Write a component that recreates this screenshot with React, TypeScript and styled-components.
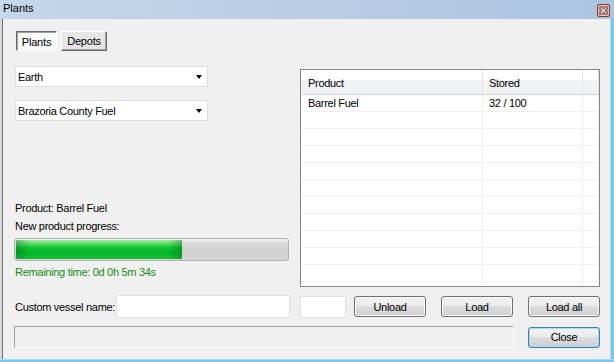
import React from "react";
import styled, { createGlobalStyle } from "styled-components";

const GlobalStyle = createGlobalStyle`
  html, body {
    margin: 0;
    padding: 0;
    width: 614px;
    height: 362px;
    overflow: hidden;
    background: #f0f0f0;
  }
  body {
    font-family: "Liberation Sans", Arial, sans-serif;
    font-size: 11px;
    color: #000;
  }
`;

const Window = styled.div`
  width: 614px;
  height: 362px;
  display: flex;
  flex-direction: column;
`;

const TitleBar = styled.div`
  height: 19px;
  flex: none;
  display: flex;
  align-items: center;
  justify-content: space-between;
  padding: 0 4px 0 3px;
  background: linear-gradient(to right, #c4d7eb 0%, #b6cce4 60%, #abc5e1 100%);
`;

const TitleText = styled.span`
  font-size: 11px;
  line-height: 19px;
  margin-top: -2px;
`;

const Frame = styled.div`
  flex: 1;
  display: flex;
  min-height: 0;
`;

const LeftEdge = styled.div`
  width: 3px;
  flex: none;
  background: linear-gradient(to right, #dadada 0 2px, #6f6f6f 2px 3px);
`;

const RightEdge = styled.div`
  width: 4px;
  flex: none;
  background: linear-gradient(to right, #a9dcf3 0 1px, #7cc6ec 1px 4px);
`;

const BottomEdge = styled.div`
  height: 3px;
  flex: none;
  background: linear-gradient(to bottom, #a9dcf3 0 1px, #7cc6ec 1px 3px);
`;

const Client = styled.div`
  flex: 1;
  background: #f0f0f0;
  padding: 12px 10px 11px 11px;
  display: flex;
  flex-direction: column;
`;

const TopGrid = styled.div`
  display: grid;
  grid-template-columns: 275px 300px;
  column-gap: 11px;
  height: 256px;
`;

const LeftCol = styled.div`
  display: flex;
  flex-direction: column;
`;

const TabRow = styled.div`
  display: flex;
  gap: 4px;
  padding-left: 2px;
  height: 20px;
`;

const TabButton = styled.div<{ $pressed?: boolean }>`
  box-sizing: border-box;
  height: 20px;
  width: ${(p) => (p.$pressed ? "41px" : "46px")};
  display: flex;
  align-items: center;
  justify-content: center;
  letter-spacing: -0.2px;
  padding-top: ${(p) => (p.$pressed ? "1px" : "0")};
  border: 1px solid;
  border-color: ${(p) =>
    p.$pressed ? "#6a6a6a #ffffff #ffffff #6a6a6a" : "#ffffff #6a6a6a #6a6a6a #ffffff"};
  background: ${(p) => (p.$pressed ? "#f9f9f9" : "#e6e6e6")};
  box-shadow: ${(p) =>
    p.$pressed ? "inset 1px 1px 0 #a0a0a0" : "inset -1px -1px 0 #a0a0a0"};
`;

const Combo = styled.div<{ $top: number }>`
  box-sizing: border-box;
  width: 193px;
  height: 21px;
  margin-left: 1px;
  margin-top: ${(p) => p.$top}px;
  background: #fff;
  border: 1px solid #dedede;
  display: flex;
  align-items: center;
  justify-content: space-between;
  padding: 0 4px 0 2px;
  letter-spacing: -0.3px;
`;

const ComboArrow = styled.span`
  width: 0;
  height: 0;
  border-left: 3.5px solid transparent;
  border-right: 3.5px solid transparent;
  border-top: 4px solid #000;
  margin-right: 1px;
`;

const Label = styled.div<{ $top: number; $green?: boolean }>`
  margin-top: ${(p) => p.$top}px;
  margin-left: 1px;
  height: 13px;
  line-height: 13px;
  letter-spacing: -0.3px;
  white-space: nowrap;
  color: ${(p) => (p.$green ? "#138c13" : "#000")};
`;

const Progress = styled.div`
  box-sizing: border-box;
  margin-top: 5px;
  height: 23px;
  width: 275px;
  border: 1px solid #b2b2b2;
  border-radius: 3px;
  background: linear-gradient(to bottom, #f2f2f2 0%, #dadada 20%, #cfcfcf 60%, #d6d6d6 100%);
  padding: 1px;
  display: flex;
`;

const ProgressFill = styled.div`
  height: 100%;
  border-radius: 1px;
  background: linear-gradient(
      to right,
      rgba(0, 90, 20, 0.35) 0%,
      rgba(0, 90, 20, 0) 8%,
      rgba(0, 90, 20, 0) 92%,
      rgba(0, 90, 20, 0.35) 100%
    ),
    linear-gradient(to bottom, #a4eca8 0%, #5fdc6a 18%, #0fc234 40%, #04b526 70%, #1ac53a 100%);
`;

const ListBox = styled.div`
  box-sizing: border-box;
  margin-top: 38px;
  height: 218px;
  border: 1px solid #828790;
  background: #fff;
  overflow: hidden;
`;

const ListRow = styled.div<{ $header?: boolean }>`
  display: grid;
  grid-template-columns: 182px 100px 1fr;
  height: ${(p) => (p.$header ? "25px" : "17px")};
  box-sizing: border-box;
  border-bottom: 1px solid ${(p) => (p.$header ? "#d6d6d6" : "#f0f0f0")};
  background: ${(p) =>
    p.$header ? "linear-gradient(to bottom, #ffffff 0%, #ffffff 40%, #f1f2f4 41%, #f1f2f4 100%)" : "#fff"};
`;

const Cell = styled.div<{ $header?: boolean; $pad: number }>`
  box-sizing: border-box;
  padding-left: ${(p) => p.$pad}px;
  display: flex;
  align-items: center;
  letter-spacing: -0.3px;
  white-space: nowrap;
  border-right: 1px solid ${(p) => (p.$header ? "#e3e4e6" : "#f0f0f0")};
  padding-top: ${(p) => (p.$header ? "1px" : "0")};
`;

const BottomRow = styled.div<{ $height: number }>`
  margin-top: 8px;
  height: ${(p) => p.$height}px;
  display: flex;
  align-items: center;
`;

const FieldLabel = styled.div`
  width: 101px;
  margin-left: 1px;
  letter-spacing: -0.3px;
  white-space: nowrap;
`;

const TextBox = styled.div<{ $width: number; $left: number; $height: number }>`
  box-sizing: border-box;
  width: ${(p) => p.$width}px;
  height: ${(p) => p.$height}px;
  margin-left: ${(p) => p.$left}px;
  background: #fff;
  border: 1px solid #e1e1e1;
`;

const Button = styled.div<{ $left: number; $focused?: boolean }>`
  box-sizing: border-box;
  width: 72px;
  height: 21px;
  margin-left: ${(p) => p.$left}px;
  border-radius: 3px;
  border: 1px solid ${(p) => (p.$focused ? "#3c7fb1" : "#707070")};
  box-shadow: ${(p) => (p.$focused ? "inset 0 0 0 1px #a6dcf5" : "inset 0 0 0 1px #fbfbfb")};
  background: linear-gradient(to bottom, #f2f2f2 0%, #ebebeb 49%, #dddddd 50%, #cfcfcf 100%);
  display: flex;
  align-items: center;
  justify-content: center;
  letter-spacing: -0.3px;
`;

const StatusPanel = styled.div`
  box-sizing: border-box;
  width: 500px;
  height: 22px;
  border-style: solid;
  border-width: 1px;
  border-color: #a0a0a0 #ffffff #ffffff #a0a0a0;
`;

const CloseGlyph = () => (
  <svg width="13" height="13" viewBox="0 0 13 13" style={{ marginTop: 1 }}>
    <rect x="0.5" y="0.5" width="12" height="12" rx="1.5" fill="#c98a85" stroke="#7d3b36" />
    <rect x="1.5" y="1.5" width="10" height="10" rx="1" fill="none" stroke="#e9c2bd" />
    <path d="M4 4 L9 9 M9 4 L4 9" stroke="#5a1e1a" strokeWidth="2.6" strokeLinecap="square" />
    <path d="M4 4 L9 9 M9 4 L4 9" stroke="#ffffff" strokeWidth="1.3" strokeLinecap="square" />
  </svg>
);

const emptyRows = Array.from({ length: 11 });

export default function App() {
  return (
    <>
      <GlobalStyle />
      <Window>
        <TitleBar>
          <TitleText>Plants</TitleText>
          <CloseGlyph />
        </TitleBar>
        <Frame>
          <LeftEdge />
          <Client>
            <TopGrid>
              <LeftCol>
                <TabRow>
                  <TabButton $pressed>Plants</TabButton>
                  <TabButton>Depots</TabButton>
                </TabRow>
                <Combo $top={15}>
                  <span>Earth</span>
                  <ComboArrow />
                </Combo>
                <Combo $top={13}>
                  <span>Brazoria County Fuel</span>
                  <ComboArrow />
                </Combo>
                <Label $top={81}>Product: Barrel Fuel</Label>
                <Label $top={5}>New product progress:</Label>
                <Progress>
                  <ProgressFill style={{ width: `${(166 / 271) * 100}%` }} />
                </Progress>
                <Label $top={5} $green>
                  Remaining time: 0d 0h 5m 34s
                </Label>
              </LeftCol>
              <ListBox>
                <ListRow $header>
                  <Cell $header $pad={7}>Product</Cell>
                  <Cell $header $pad={6}>Stored</Cell>
                  <Cell $header $pad={0} />
                </ListRow>
                <ListRow>
                  <Cell $pad={7}>Barrel Fuel</Cell>
                  <Cell $pad={6}>32 / 100</Cell>
                  <Cell $pad={0} />
                </ListRow>
                {emptyRows.map((_, i) => (
                  <ListRow key={i}>
                    <Cell $pad={7} />
                    <Cell $pad={6} />
                    <Cell $pad={0} />
                  </ListRow>
                ))}
              </ListBox>
            </TopGrid>
            <BottomRow $height={23}>
              <FieldLabel>Custom vessel name:</FieldLabel>
              <TextBox $width={174} $left={0} $height={23} />
              <TextBox $width={46} $left={10} $height={22} />
              <Button $left={8}>Unload</Button>
              <Button $left={15}>Load</Button>
              <Button $left={15}>Load all</Button>
            </BottomRow>
            <BottomRow $height={22}>
              <StatusPanel />
              <Button $left={14} $focused>
                Close
              </Button>
            </BottomRow>
          </Client>
          <RightEdge />
        </Frame>
        <BottomEdge />
      </Window>
    </>
  );
}
